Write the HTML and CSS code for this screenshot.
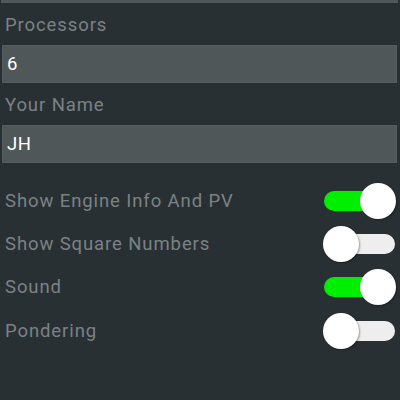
FILE: index.html
```html
<!DOCTYPE html>
<html>
<head>
<meta charset="utf-8">
<link rel="stylesheet" href="styles.css">
</head>
<body>
<div class="screen">
  <div class="topbar"></div>
  <div class="field-label">Processors</div>
  <div class="input">6</div>
  <div class="field-label">Your Name</div>
  <div class="input">JH</div>
  <div class="toggles">
    <div class="row"><span class="row-label">Show Engine Info And PV</span><span class="switch on"><span class="track"></span><span class="knob"></span></span></div>
    <div class="row"><span class="row-label">Show Square Numbers</span><span class="switch"><span class="track"></span><span class="knob"></span></span></div>
    <div class="row"><span class="row-label">Sound</span><span class="switch on"><span class="track"></span><span class="knob"></span></span></div>
    <div class="row"><span class="row-label">Pondering</span><span class="switch"><span class="track"></span><span class="knob"></span></span></div>
  </div>
</div>
</body>
</html>
```
FILE: styles.css
```css
html, body {
  margin: 0;
  padding: 0;
  background: #293033;
  font-family: Roboto, "Noto Sans", sans-serif;
}
.screen {
  width: 400px;
  height: 400px;
  display: flex;
  flex-direction: column;
  overflow: hidden;
}
.topbar {
  height: 3px;
  margin: 0 2px 0 1px;
  background: #4f5759;
}
.field-label {
  height: 42px;
  line-height: 44px;
  padding-left: 5px;
  font-size: 18.5px;
  letter-spacing: 0.9px;
  color: #7b8286;
}
.input {
  line-height: 37px;
  margin: 0 3px 0 2px;
  padding-left: 4px;
  background: #4f5759;
  border: 1px solid #555d5f;
  box-sizing: border-box;
  height: 38px;
  color: #ffffff;
  font-size: 18.5px;
  letter-spacing: 0.6px;
}
.toggles {
  display: flex;
  flex-direction: column;
  padding-top: 16px;
}
.row {
  height: 43.4px;
  display: flex;
  align-items: center;
  justify-content: space-between;
  padding: 0 4px 0 5px;
}
.row-label {
  font-size: 18.5px;
  letter-spacing: 0.9px;
  color: #7b8286;
}
.switch {
  position: relative;
  width: 73px;
  height: 36px;
}
.track {
  position: absolute;
  left: 1px;
  right: 1px;
  top: 8px;
  height: 20px;
  border-radius: 10px;
  background: #eeeeee;
}
.switch.on .track {
  background: #00ee00;
}
.knob {
  position: absolute;
  top: 0;
  left: 0;
  width: 36px;
  height: 36px;
  border-radius: 50%;
  background: #ffffff;
  box-shadow: 1px 1px 2px rgba(0,0,0,0.35);
}
.switch.on .knob {
  left: auto;
  right: 0;
}
```
